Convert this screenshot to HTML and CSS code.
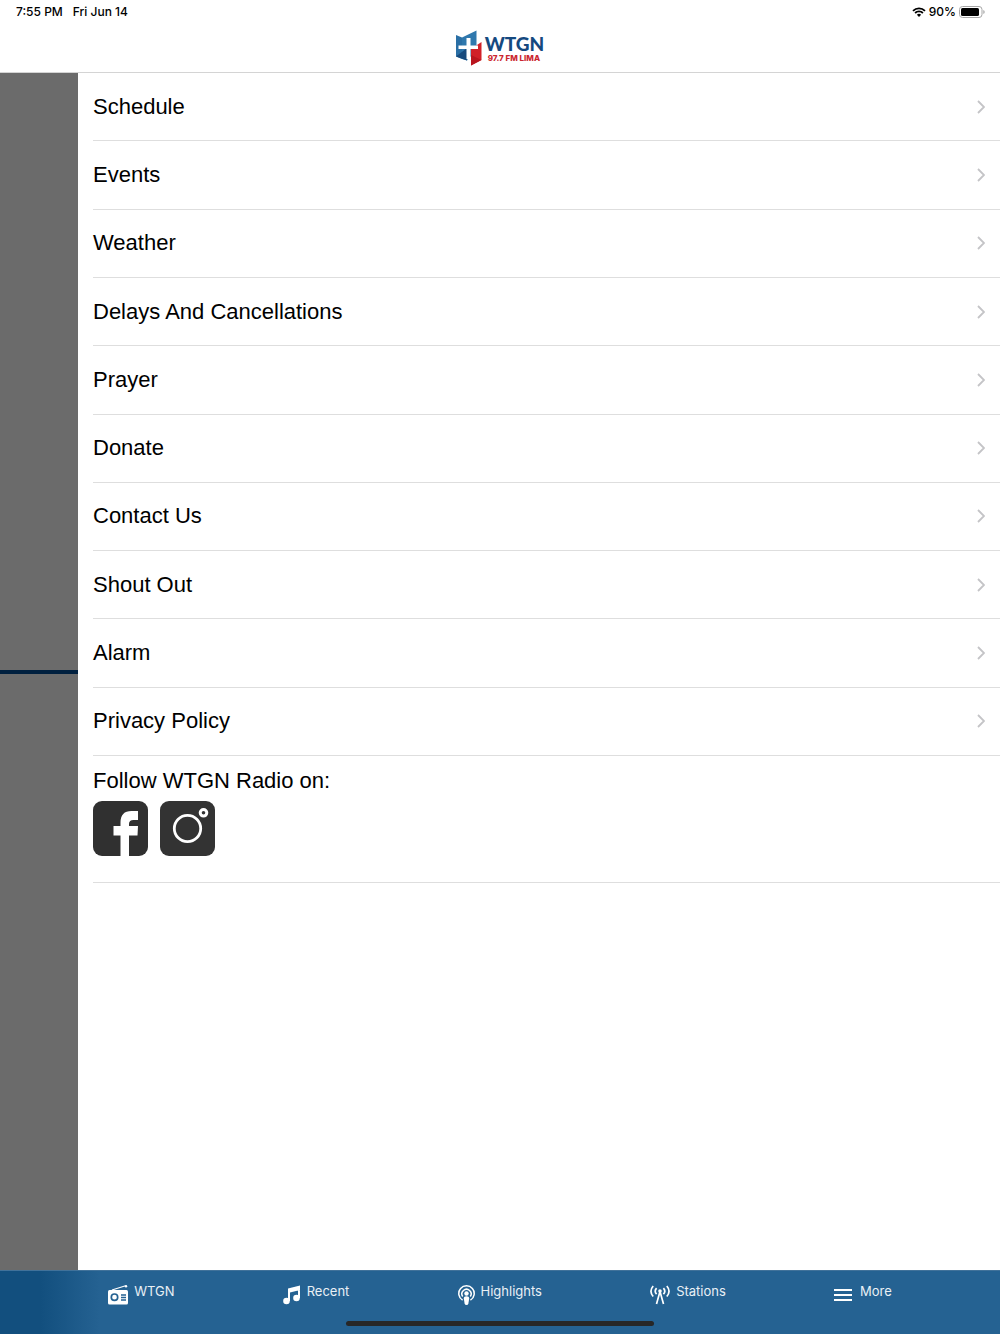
FILE: index.html
```html
<!DOCTYPE html>
<html lang="en">
<head>
<meta charset="utf-8">
<meta name="viewport" content="width=device-width, initial-scale=1">
<title>WTGN Radio</title>
<link rel="stylesheet" href="styles.css">
</head>
<body>
<svg class="defs" aria-hidden="true">
  <symbol id="chevron" viewBox="0 0 8 14"><path d="M1 1l6 6-6 6" fill="none" stroke="#c4c4c7" stroke-width="1.800"/></symbol>
</svg>
<div class="status">
  <div class="status-group"><span>7:55 PM</span><span>Fri Jun 14</span></div>
  <div class="status-right">
    <svg width="14" height="10" viewBox="0 0 14 10" aria-label="Wi-Fi"><path d="M1 3.8a8.6 8.6 0 0 1 12 0M3.1 6a5.6 5.6 0 0 1 7.8 0" fill="none" stroke="#000" stroke-width="1.8"/><path d="M4.9 7.8a3 3 0 0 1 4.2 0L7 10z"/></svg>
    <span>90%</span>
    <svg width="26" height="12" viewBox="0 0 26 12" aria-label="Battery"><rect x=".5" y=".5" width="22.5" height="11" rx="3" fill="none" stroke="#a6a6a6"/><rect x="2" y="2" width="18" height="8" rx="1.5"/><path d="M24.3 4v4q1.4-.6 1.4-2t-1.4-2z" fill="#a6a6a6"/></svg>
  </div>
</div>
<header class="header">
  <svg width="26" height="36" viewBox="0 0 26 36" aria-hidden="true">
    <path d="M0 5l6 2.500v21.500l-6-2.500z" fill="#2a6fa5"/>
    <path d="M6 7.500L20.500.5V16H16v9L11 30.500 6 29z" fill="#2f78ad"/>
    <path d="M0 26.500L11 18v12.500z" fill="#174a7d"/>
    <path d="M15 19l10.500-7v18L15 35.500z" fill="#d12028"/>
    <path d="M15 25l10.500 5L15 35.500z" fill="#b9151e"/>
    <path d="M10.500 8h4v7.500h7.500v3.500h-7.500v11.500l-4-1.500V19H2.500v-3.500h8z" fill="#fff"/>
  </svg>
  <div class="brand"><span class="brand-name">WTGN</span><span class="brand-sub">97.7 FM LIMA</span></div>
</header>
<main class="main">
  <div class="backdrop"><div></div><div></div></div>
  <div class="drawer">
    <nav class="menu" aria-label="More">
      <a href="#">Schedule<svg width="8" height="14"><use href="#chevron"/></svg></a>
      <a href="#">Events<svg width="8" height="14"><use href="#chevron"/></svg></a>
      <a href="#">Weather<svg width="8" height="14"><use href="#chevron"/></svg></a>
      <a href="#">Delays And Cancellations<svg width="8" height="14"><use href="#chevron"/></svg></a>
      <a href="#">Prayer<svg width="8" height="14"><use href="#chevron"/></svg></a>
      <a href="#">Donate<svg width="8" height="14"><use href="#chevron"/></svg></a>
      <a href="#">Contact Us<svg width="8" height="14"><use href="#chevron"/></svg></a>
      <a href="#">Shout Out<svg width="8" height="14"><use href="#chevron"/></svg></a>
      <a href="#">Alarm<svg width="8" height="14"><use href="#chevron"/></svg></a>
      <a href="#">Privacy Policy<svg width="8" height="14"><use href="#chevron"/></svg></a>
    </nav>
    <section class="follow">
      <p>Follow WTGN Radio on:</p>
      <div class="social">
        <a href="#" aria-label="Facebook"><svg width="55" height="55" viewBox="0 0 55 55"><rect width="55" height="55" rx="9" fill="#303030"/><path d="M27.500 55V34.500h-7V25h7v-3.500q0-11.500 11-11.500h6.500v9h-4.500q-4.500 0-4.500 4V25h9l-.5 9.500H36V55z" fill="#fff"/></svg></a>
        <a href="#" aria-label="Instagram"><svg width="55" height="55" viewBox="0 0 55 55"><rect width="55" height="55" rx="9" fill="#333"/><g fill="none" stroke="#fff"><circle cx="27.500" cy="27.500" r="13.200" stroke-width="2.800"/><circle cx="43.500" cy="11.800" r="3.300" stroke-width="3"/></g></svg></a>
      </div>
    </section>
  </div>
</main>
<footer class="tabbar">
  <nav class="tabs" aria-label="Sections">
    <a href="#"><svg width="20" height="20" viewBox="0 0 20 20"><path d="M4 5L17.500.8" stroke="#fff" stroke-width="1.200"/><circle cx="18" cy="1.200" r="1.200" fill="#fff"/><rect y="5" width="20" height="14.500" rx="1.500" fill="#fff"/><circle cx="6.500" cy="12.200" r="3.200" fill="none" stroke="#256292" stroke-width="1.700"/><path d="M13 10h5M13 12.500h5M13 15h5" stroke="#256292" stroke-width="1.300"/></svg><span>WTGN</span></a>
    <a href="#"><svg width="18" height="20" viewBox="0 0 18 20"><path d="M5 3.500L17 .5V5L7 7.500V16H5zM15 2h2v11h-2z" fill="#fff"/><circle cx="3.500" cy="16" r="3.300" fill="#fff"/><circle cx="13.500" cy="13" r="3.300" fill="#fff"/></svg><span>Recent</span></a>
    <a href="#"><svg width="17" height="20" viewBox="0 0 17 20"><g fill="none" stroke="#fff" stroke-width="1.500"><path d="M4.600 15.200a7.700 7.700 0 1 1 7.800 0"/><path d="M4.700 11.500a4.600 4.600 0 1 1 7.600 0"/></g><circle cx="8.500" cy="8.500" r="2.200" fill="#fff"/><path d="M5.800 13.500q0-2.200 2.700-2.200t2.700 2.200l-.8 5q-.3 1.500-1.900 1.500t-1.900-1.500z" fill="#fff"/></svg><span>Highlights</span></a>
    <a href="#"><svg width="20" height="20" viewBox="0 0 20 20"><g fill="none" stroke="#fff" stroke-width="1.700"><path d="M3.200 1Q-1.300 6.200 3.200 11.500M16.800 1q4.500 5.200 0 10.500M6.600 3.200q-2.800 3 0 6M13.400 3.200q2.800 3 0 6"/><path d="M10 6.500L6.500 19M10 6.500L13.500 19"/></g><circle cx="10" cy="6" r="1.800" fill="#fff"/></svg><span>Stations</span></a>
    <a href="#"><svg width="20" height="20" viewBox="0 0 20 20"><path d="M0 5h18M0 10h18M0 15h18" stroke="#fff" stroke-width="2"/></svg><span>More</span></a>
  </nav>
  <div class="home"></div>
</footer>
</body>
</html>
```
FILE: styles.css
```css
* { box-sizing: border-box; }
body {
  margin: 0;
  min-height: 100vh;
  display: flex;
  flex-direction: column;
  background: #fff;
  color: #000;
  font-family: "Liberation Sans", Arial, sans-serif;
}
a { color: inherit; text-decoration: none; }
svg { display: block; flex: none; }
.defs { display: none; }
.status {
  display: flex;
  justify-content: space-between;
  height: 24px;
  padding: 0 15px 0 16px;
  align-items: center;
  font: 500 12px/16px Inter, sans-serif;
}
.status-group { display: flex; gap: 10px; }
.status-right { display: flex; gap: 3px; align-items: center; }
.header {
  display: flex;
  justify-content: center;
  align-items: center;
  gap: 3px;
  height: 49px;
  border-bottom: 1px solid #d4d4d4;
}
.brand { display: flex; flex-direction: column; }
.brand-name { font: 900 19px/19px Lato, sans-serif; color: #15497f; }
.brand-sub { padding-left: 3px; font: 800 8px/10px Inter, sans-serif; color: #cb2730; }
.main { flex: 1; display: flex; }
.backdrop {
  flex: none;
  width: 78px;
  display: flex;
  flex-direction: column;
  background: #6b6b6b;
}
.backdrop div { flex: 1; }
.backdrop div:first-child { border-bottom: 4px solid #00203f; }
.drawer { flex: 1; padding-left: 15px; }
.menu {
  display: grid;
  grid-auto-rows: 1fr;
  min-height: 683px;
}
.menu a {
  display: flex;
  align-items: center;
  justify-content: space-between;
  padding-right: 15px;
  border-bottom: 1px solid #dedede;
  font-size: 22px;
  line-height: 28px;
}
.follow { padding: 11px 0 26px; border-bottom: 1px solid #dedede; }
.follow p { margin: 0 0 6px; font-size: 22px; line-height: 28px; }
.social { display: flex; gap: 12px; }
.tabbar {
  display: flex;
  flex-direction: column;
  align-items: center;
  justify-content: space-between;
  height: 64px;
  padding: 11px 0 8px;
  background: linear-gradient(90deg, #124f7e 0, #124f7e 40px, #256292 100px);
  border-top: 1px solid #41729a;
}
.tabs { display: flex; justify-content: space-evenly; width: 100%; }
.tabs a {
  display: flex;
  gap: 6px;
  color: #e9f0f5;
  font: 400 13px/18px Inter, sans-serif;
}
.tabs svg { margin-top: 3px; }
.home { width: 308px; height: 5px; border-radius: 3px; background: #272727; }
```
